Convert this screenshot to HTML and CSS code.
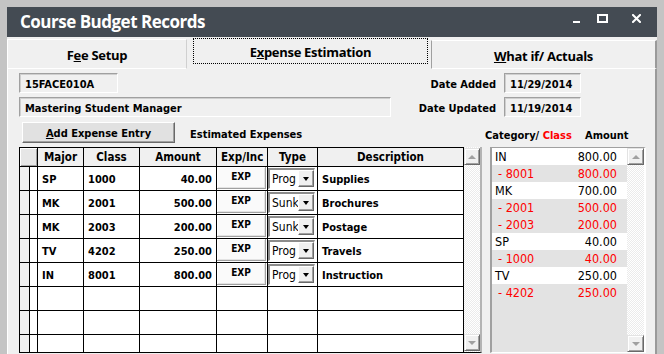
FILE: index.html
```html
<!DOCTYPE html>
<html>
<head>
<meta charset="utf-8">
<link rel="stylesheet" href="styles.css">
</head>
<body>
<div class="win">
  <div class="titlebar">
    <span class="title">Course Budget Records</span>
    <div class="ctrls">
      <svg class="ic-min" width="7" height="9" viewBox="0 0 7 9"><rect x="0" y="7" width="7" height="2" fill="#fff"/></svg>
      <svg class="ic-max" width="11" height="9" viewBox="0 0 11 9"><rect x="1" y="1" width="9" height="7" fill="none" stroke="#fff" stroke-width="2"/></svg>
      <svg class="ic-close" width="9" height="9" viewBox="0 0 9 9"><path d="M1 1L8 8M8 1L1 8" stroke="#fff" stroke-width="2" stroke-linecap="square"/></svg>
    </div>
  </div>
  <div class="tabs">
    <div class="tab tab-fee">F<u>e</u>e Setup</div>
    <div class="tab tab-exp"><div class="focus">E<u>x</u>pense Estimation</div></div>
    <div class="tab tab-what"><u>W</u>hat if/ Actuals</div>
  </div>
  <div class="page">
    <div class="row r1">
      <div class="field f-code">15FACE010A</div>
      <span class="lbl">Date Added</span>
      <div class="field f-date">11/29/2014</div>
    </div>
    <div class="row r2">
      <div class="field f-name">Mastering Student Manager</div>
      <span class="lbl">Date Updated</span>
      <div class="field f-date">11/19/2014</div>
    </div>
    <div class="row r3">
      <div class="r3-left">
        <div class="btn"><u>A</u>dd Expense Entry</div>
        <span class="lbl2">Estimated Expenses</span>
      </div>
      <span class="cat">Category/ <span class="red">Class</span></span>
      <span class="amt-h">Amount</span>
    </div>
    <div class="row r4">
      <div class="gridbox">
        <div class="gridarea">
          <table>
            <colgroup>
              <col class="c1"><col class="c2"><col class="c3"><col class="c4"><col class="c5"><col class="c6"><col class="c7"><col class="c8">
            </colgroup>
            <tr class="hd">
              <th colspan="2" class="corner"></th>
              <th>Major</th><th>Class</th><th>Amount</th><th>Exp/Inc</th><th>Type</th><th>Description</th>
            </tr>
            <tr>
              <td class="rh"></td><td></td><td>SP</td><td>1000</td><td class="num">40.00</td>
              <td class="exp"><div class="expbtn">EXP</div></td>
              <td class="typ"><div class="combo"><span class="ctext">Prog</span><span class="dd"></span></div></td>
              <td>Supplies</td>
            </tr>
            <tr>
              <td class="rh"></td><td></td><td>MK</td><td>2001</td><td class="num">500.00</td>
              <td class="exp"><div class="expbtn">EXP</div></td>
              <td class="typ"><div class="combo"><span class="ctext">Sunk</span><span class="dd"></span></div></td>
              <td>Brochures</td>
            </tr>
            <tr>
              <td class="rh"></td><td></td><td>MK</td><td>2003</td><td class="num">200.00</td>
              <td class="exp"><div class="expbtn">EXP</div></td>
              <td class="typ"><div class="combo"><span class="ctext">Sunk</span><span class="dd"></span></div></td>
              <td>Postage</td>
            </tr>
            <tr>
              <td class="rh"></td><td></td><td>TV</td><td>4202</td><td class="num">250.00</td>
              <td class="exp"><div class="expbtn">EXP</div></td>
              <td class="typ"><div class="combo"><span class="ctext">Prog</span><span class="dd"></span></div></td>
              <td>Travels</td>
            </tr>
            <tr>
              <td class="rh"></td><td></td><td>IN</td><td>8001</td><td class="num">800.00</td>
              <td class="exp"><div class="expbtn">EXP</div></td>
              <td class="typ"><div class="combo"><span class="ctext">Prog</span><span class="dd"></span></div></td>
              <td>Instruction</td>
            </tr>
            <tr><td class="rh"></td><td></td><td></td><td></td><td></td><td></td><td></td><td></td></tr>
            <tr><td class="rh"></td><td></td><td></td><td></td><td></td><td></td><td></td><td></td></tr>
            <tr><td class="rh"></td><td></td><td></td><td></td><td></td><td></td><td></td><td></td></tr>
          </table>
        </div>
        <div class="vscroll">
          <div class="sb-btn up"></div>
          <div class="sb-track"></div>
          <div class="sb-btn down"></div>
        </div>
      </div>
      <div class="listbox">
        <div class="list">
          <div class="li par"><span>IN</span><span>800.00</span></div>
          <div class="li ch"><span>- 8001</span><span>800.00</span></div>
          <div class="li par"><span>MK</span><span>700.00</span></div>
          <div class="li ch"><span>- 2001</span><span>500.00</span></div>
          <div class="li ch"><span>- 2003</span><span>200.00</span></div>
          <div class="li par"><span>SP</span><span>40.00</span></div>
          <div class="li ch"><span>- 1000</span><span>40.00</span></div>
          <div class="li par"><span>TV</span><span>250.00</span></div>
          <div class="li ch"><span>- 4202</span><span>250.00</span></div>
        </div>
        <div class="vscroll v2">
          <div class="sb-btn up"></div>
          <div class="sb-track"></div>
          <div class="sb-btn down"></div>
        </div>
      </div>
    </div>
  </div>
</div>
</body>
</html>
```

FILE: styles.css
```css
* { box-sizing: border-box; }
html, body { margin: 0; }
body {
  background: #c4c4c4;
  padding: 7px 0 0 7px;
  width: 664px;
  height: 354px;
  overflow: hidden;
  font-family: "DejaVu Sans Condensed", "DejaVu Sans", sans-serif;
  font-stretch: semi-condensed;
  font-size: 11px;
  font-weight: bold;
  color: #000;
}
.win {
  width: 650px;
  height: 347px;
  background: #f0f0f0;
  display: flex;
  flex-direction: column;
}
.titlebar {
  flex: none;
  height: 30px;
  background: #444b53;
  display: flex;
  align-items: center;
  padding: 0 16px 0 13px;
}
.title {
  font-family: "Open Sans", sans-serif;
  font-stretch: normal;
  font-weight: bold;
  font-size: 17px;
  letter-spacing: -0.5px;
  color: #fff;
  line-height: 1;
  margin-top: -1px;
}
.ctrls {
  margin-left: auto;
  display: flex;
  align-self: flex-start;
  padding-top: 7px;
}
.ctrls svg { display: block; }
.ic-max { margin-left: 17px; }
.ic-close { margin-left: 24px; }

.tabs {
  flex: none;
  height: 32px;
  display: flex;
  align-items: flex-end;
}
.tab {
  display: flex;
  align-items: center;
  justify-content: center;
  font-family: "Open Sans", sans-serif;
  font-stretch: normal;
  font-weight: bold;
  font-size: 13px;
  letter-spacing: -0.3px;
}
.tab-fee {
  width: 180px;
  height: 30px;
  border-top: 1px solid #fff;
  border-left: 1px solid #fff;
  border-right: 1px solid #d0d0d0;
  border-bottom: 1px solid #fff;
  margin-right: 3px;
  padding-top: 2px;
}
.tab-exp {
  width: 241px;
  height: 32px;
  align-items: flex-start;
  padding: 1px 3px 0;
}
.focus {
  width: 100%;
  height: 26px;
  border: 1px dotted #000;
  display: flex;
  align-items: center;
  justify-content: center;
  padding-top: 2px;
}
.tab-what {
  flex: 1;
  height: 29px;
  border-left: 1px solid #a0a0a0;
  border-top: 1px solid #fff;
  border-right: 2px solid #9a9a9a;
  border-bottom: 1px solid #fff;
  padding-top: 2px;
}

.page {
  flex: 1;
  border-left: 1px solid #fff;
  border-right: 2px solid #9a9a9a;
  padding: 4px 0 0 11px;
  display: flex;
  flex-direction: column;
}
.row { display: flex; align-items: center; }
.r1 { height: 20px; }
.r2 { height: 20px; margin-top: 4px; }
.r3 { height: 21px; margin-top: 5px; }
.r4 { height: 206px; margin-top: 4px; align-items: flex-start; }

.field {
  height: 20px;
  border-top: 1px solid #a0a0a0;
  border-left: 1px solid #a0a0a0;
  border-right: 1px solid #fff;
  border-bottom: 1px solid #fff;
  box-shadow: inset 1px 1px 0 #cfcfcf;
  padding: 3px 0 0 5px;
  line-height: 16px;
  white-space: nowrap;
  overflow: hidden;
}
.f-code { width: 99px; }
.f-name { width: 372px; }
.f-date { width: 77px; margin-right: 74px; }
.lbl { margin-left: auto; margin-right: 8px; padding-top: 2px; }

.r3-left { width: 466px; height: 21px; display: flex; align-items: center; }
.btn {
  margin-left: 3px;
  width: 153px;
  height: 21px;
  background: #e1e1e1;
  border: 1px solid;
  border-color: #fff #696969 #696969 #fff;
  box-shadow: inset -1px -1px 0 #a0a0a0;
  display: flex;
  align-items: center;
  justify-content: center;
  padding-top: 1px;
}
.lbl2 { margin-left: 15px; padding-top: 4px; }
.cat { width: 100px; padding-top: 5px; }
.amt-h { padding-top: 5px; }
.red { color: #f00; }

.gridbox {
  width: 463px;
  height: 206px;
  display: flex;
  border-right: 2px solid #b4b4b4;
  border-bottom: 1px solid #000;
}
.gridarea { width: 445px; height: 205px; overflow: hidden; }
table {
  border-collapse: collapse;
  table-layout: fixed;
  width: 445px;
}
.c1 { width: 10px; }
.c2 { width: 8px; }
.c3 { width: 46px; }
.c4 { width: 56px; }
.c5 { width: 77px; }
.c6 { width: 51px; }
.c7 { width: 50px; }
.c8 { width: 146px; }
th, td {
  border: 1px solid #000;
  padding: 0 4px;
  white-space: nowrap;
  overflow: hidden;
  text-align: left;
  background: #fff;
}
th {
  height: 19px;
  text-align: center;
  background: #f0f0f0;
  font-size: 11.5px;
}
th.corner {
  background: #e6e6e6;
  box-shadow: inset 1px 1px 0 #fff, inset -1px -1px 0 #a0a0a0;
}
td { height: 24px; padding-top: 1px; }
td.rh { background: #f0f0f0; }
td.num { text-align: right; }
td.exp { padding: 0; vertical-align: top; }
.expbtn {
  height: 22px;
  width: 49px;
  background: #fafafa;
  border-right: 1px solid #a0a0a0;
  border-bottom: 1px solid #a0a0a0;
  box-shadow: inset 1px 1px 0 #fff, inset -1px -1px 0 #e3e3e3;
  display: flex;
  align-items: center;
  justify-content: center;
  font-size: 10px;
  padding-bottom: 2px;
}
td.typ { padding: 1px 0 0 0; vertical-align: top; }
.combo {
  width: 47px;
  height: 21px;
  border-top: 2px solid #8c8c8c;
  border-left: 2px solid #8c8c8c;
  border-right: 1px solid #fff;
  border-bottom: 1px solid #fff;
  background: #fff;
  display: flex;
}
.ctext {
  width: 28px;
  overflow: hidden;
  padding-left: 2px;
  font-weight: normal;
  font-size: 12px;
  line-height: 18px;
}
.dd {
  width: 16px;
  height: 17px;
  background: #f0f0f0;
  border: 1px solid;
  border-color: #fff #696969 #696969 #fff;
  box-shadow: inset -1px -1px 0 #a0a0a0;
  display: flex;
  align-items: center;
  justify-content: center;
}
.dd::after {
  content: "";
  border-left: 3.5px solid transparent;
  border-right: 3.5px solid transparent;
  border-top: 4px solid #000;
}

.vscroll {
  width: 16px;
  height: 205px;
  flex: none;
  display: flex;
  flex-direction: column;
  padding: 1px 0;
  background: repeating-conic-gradient(#fff 0 25%, #ebebeb 0 50%) 0 0 / 2px 2px;
}
.sb-btn {
  height: 17px;
  flex: none;
  background: #f0f0f0;
  border: 1px solid;
  border-color: #e3e3e3 #696969 #696969 #e3e3e3;
  box-shadow: inset 1px 1px 0 #fff, inset -1px -1px 0 #a0a0a0;
  display: flex;
  align-items: center;
  justify-content: center;
}
.sb-track { flex: 1; }
.up::after {
  content: "";
  border-left: 4px solid transparent;
  border-right: 4px solid transparent;
  border-bottom: 4px solid #a0a0a0;
}
.down::after {
  content: "";
  border-left: 4px solid transparent;
  border-right: 4px solid transparent;
  border-top: 4px solid #a0a0a0;
}

.listbox {
  margin-left: 8px;
  width: 156px;
  height: 206px;
  display: flex;
  border-top: 1px solid #a0a0a0;
  border-left: 2px solid #a0a0a0;
  border-right: 2px solid #fff;
  border-bottom: 1px solid #fff;
}
.list {
  width: 135px;
  height: 204px;
  background: #e3e3e3;
  font-weight: normal;
  font-size: 12.5px;
}
.li {
  height: 17px;
  display: flex;
  justify-content: space-between;
  align-items: center;
  padding: 0 10px 0 3px;
}
.li.par { background: #fff; }
.li.ch { color: #f00; padding-left: 6px; }
.v2 { width: 17px; height: 204px; padding: 0; }
```
